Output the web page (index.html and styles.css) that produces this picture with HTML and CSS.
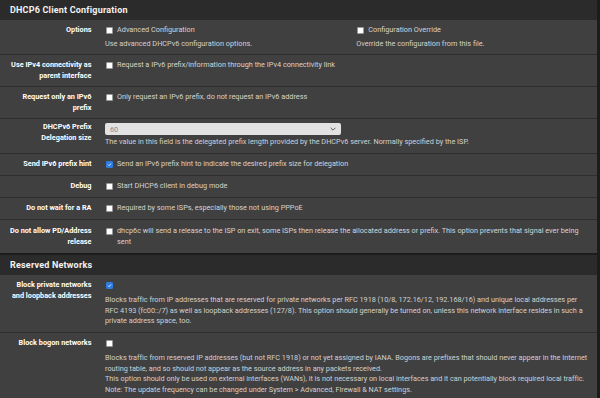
FILE: index.html
```html
<!DOCTYPE html>
<html>
  <head>
    <title>Interfaces: WAN</title>
    <link rel="stylesheet" href="styles.css">
  </head>
  <body>
    <div class="panel">
      <div class="panel-heading">
        <h2 class="panel-title">DHCP6 Client Configuration</h2>
      </div>
      <div class="panel-body">
        <div class="form-group">
          <label class="col-label">Options</label>
          <div class="col-half">
            <label class="chk"><span class="box"></span>Advanced Configuration</label>
            <span class="help">Use advanced DHCPv6 configuration options.</span>
          </div>
          <div class="col-half col-half-right">
            <label class="chk"><span class="box"></span>Configuration Override</label>
            <span class="help">Override the configuration from this file.</span>
          </div>
        </div>

        <div class="form-group">
          <label class="col-label">Use IPv4 connectivity as parent interface</label>
          <div class="col-content">
            <label class="chk"><span class="box"></span>Request a IPv6 prefix/information through the IPv4 connectivity link</label>
          </div>
        </div>

        <div class="form-group">
          <label class="col-label">Request only an IPv6 prefix</label>
          <div class="col-content">
            <label class="chk"><span class="box"></span>Only request an IPv6 prefix, do not request an IPv6 address</label>
          </div>
        </div>

        <div class="form-group form-group-select">
          <label class="col-label">DHCPv6 Prefix Delegation size</label>
          <div class="col-content">
            <div class="select-wrap">
              <select class="select">
                <option>60</option>
              </select>
              <svg class="chevron" viewBox="0 0 10 6" width="6" height="4">
                <polyline points="1,1 5,5 9,1" fill="none" stroke="#555" stroke-width="1.6"/>
              </svg>
            </div>
            <span class="help">The value in this field is the delegated prefix length provided by the DHCPv6 server. Normally specified by the ISP.</span>
          </div>
        </div>

        <div class="form-group">
          <label class="col-label">Send IPv6 prefix hint</label>
          <div class="col-content">
            <label class="chk"><span class="box checked"><svg viewBox="0 0 10 10" width="7" height="7"><polyline points="2,5.2 4.2,7.4 8,2.8" fill="none" stroke="#fff" stroke-width="1.6"/></svg></span>Send an IPv6 prefix hint to indicate the desired prefix size for delegation</label>
          </div>
        </div>

        <div class="form-group">
          <label class="col-label">Debug</label>
          <div class="col-content">
            <label class="chk"><span class="box"></span>Start DHCP6 client in debug mode</label>
          </div>
        </div>

        <div class="form-group">
          <label class="col-label">Do not wait for a RA</label>
          <div class="col-content">
            <label class="chk"><span class="box"></span>Required by some ISPs, especially those not using PPPoE</label>
          </div>
        </div>

        <div class="form-group form-group-tall">
          <label class="col-label">Do not allow PD/Address release</label>
          <div class="col-content">
            <label class="chk chk-wrap"><span class="box"></span><span class="chk-text">dhcp6c will send a release to the ISP on exit, some ISPs then release the allocated address or prefix. This option prevents that signal ever being sent</span></label>
          </div>
        </div>
      </div>
    </div>

    <div class="panel">
      <div class="panel-heading">
        <h2 class="panel-title">Reserved Networks</h2>
      </div>
      <div class="panel-body">
        <div class="form-group">
          <label class="col-label">Block private networks and loopback addresses</label>
          <div class="col-content">
            <label class="chk"><span class="box checked"><svg viewBox="0 0 10 10" width="7" height="7"><polyline points="2,5.2 4.2,7.4 8,2.8" fill="none" stroke="#fff" stroke-width="1.6"/></svg></span></label>
            <span class="help help-wide">Blocks traffic from IP addresses that are reserved for private networks per RFC 1918 (10/8, 172.16/12, 192.168/16) and unique local addresses per<br>RFC 4193 (fc00::/7) as well as loopback addresses (127/8). This option should generally be turned on, unless this network interface resides in such a<br>private address space, too.</span>
          </div>
        </div>

        <div class="form-group">
          <label class="col-label">Block bogon networks</label>
          <div class="col-content">
            <label class="chk"><span class="box"></span></label>
            <span class="help help-wide">Blocks traffic from reserved IP addresses (but not RFC 1918) or not yet assigned by IANA. Bogons are prefixes that should never appear in the Internet<br>routing table, and so should not appear as the source address in any packets received.<br>This option should only be used on external interfaces (WANs), it is not necessary on local interfaces and it can potentially block required local traffic.<br>Note: The update frequency can be changed under System &gt; Advanced, Firewall &amp; NAT settings.</span>
          </div>
        </div>
      </div>
    </div>
  </body>
</html>
```

FILE: styles.css
```css
body {
  margin: 0;
  background-color: #1c1c1c;
  color: #d4d4d4;
  font-family: Roboto, "Liberation Sans", sans-serif;
  font-size: 7.3px;
  line-height: 10.8px;
}

.panel {
  width: 597px;
  background-color: #404040;
  margin-bottom: 2px;
}

.panel-heading {
  background-color: #2b2b2b;
  padding: 5px 10px 4px;
}

.panel-title {
  margin: 0;
  font-size: 9px;
  line-height: 11px;
  font-weight: bold;
  color: #f2f2f2;
  letter-spacing: 0.2px;
}

.form-group {
  display: flex;
  padding: 5px 0 4.5px;
  border-bottom: 1px solid #2e2e2e;
}

.form-group:last-child {
  border-bottom: none;
}

.form-group-select {
  padding-top: 3.5px;
}

.form-group-tall {
  padding-top: 6.5px;
  padding-bottom: 5px;
}

.col-label {
  flex: 0 0 16.667%;
  box-sizing: border-box;
  padding: 0 8px;
  text-align: right;
  font-weight: bold;
  color: #fff;
}

.col-content {
  flex: 0 0 83.333%;
  box-sizing: border-box;
  padding: 0 1px 0 5.5px;
}

.col-half {
  flex: 0 0 41.667%;
  box-sizing: border-box;
  padding: 0 8px 0 5.5px;
}

.col-half-right {
  padding-left: 8px;
}

.chk {
  display: flex;
  align-items: center;
  gap: 4px;
  padding-left: 1px;
  min-height: 11.5px;
}

.chk-wrap {
  align-items: flex-start;
}

.chk-wrap .box {
  margin-top: 2px;
}

.chk-text {
  padding-right: 6px;
}

.box {
  flex: 0 0 auto;
  width: 7px;
  height: 7px;
  box-sizing: border-box;
  background-color: #fff;
  border: 1px solid #9a9a9a;
  border-radius: 1px;
  display: flex;
  align-items: center;
  justify-content: center;
}

.box.checked {
  background-color: #2d7be0;
  border-color: #2d7be0;
}

.box svg {
  display: block;
}

.help {
  display: block;
  margin-top: 2px;
  color: #d0d0d0;
}

.help-wide {
  margin-top: 3.5px;
  white-space: nowrap;
  letter-spacing: -0.02px;
}

.select-wrap {
  position: relative;
  width: 48%;
  margin-top: 0.5px;
}

.select {
  appearance: none;
  display: block;
  width: 100%;
  height: 12.5px;
  margin: 0;
  padding: 0 5px;
  border: none;
  border-radius: 2px;
  background-color: #e2e2e2;
  color: #8a8a8a;
  font-family: inherit;
  font-size: 7.3px;
}

.chevron {
  position: absolute;
  right: 5px;
  top: 4.5px;
}
```
